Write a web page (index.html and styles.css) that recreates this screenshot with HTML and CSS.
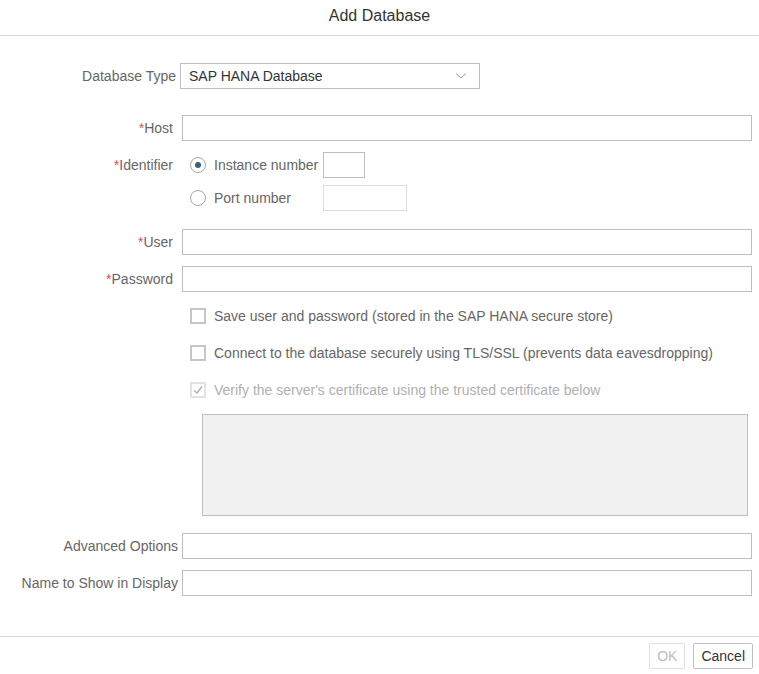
FILE: index.html
```html
<!DOCTYPE html>
<html>
<head>
<meta charset="utf-8">
<title>Add Database</title>
<link rel="stylesheet" href="styles.css">
</head>
<body>
<div class="dialog">
  <div class="header">Add Database</div>
  <div class="form">
    <div class="row">
      <label class="label label-db">Database Type</label>
      <div class="select">
        <span>SAP HANA Database</span>
        <svg class="chev" width="12" height="8" viewBox="0 0 12 8"><polyline points="1,1.5 6,6 11,1.5" fill="none" stroke="#8a9bb0" stroke-width="1"/></svg>
      </div>
    </div>
    <div class="row row-host">
      <label class="label label-req"><span class="req">*</span>Host</label>
      <input class="field" type="text">
    </div>
    <div class="row row-ident">
      <label class="label label-req label-top"><span class="req">*</span>Identifier</label>
      <div class="radios">
        <div class="radio-row">
          <span class="radio checked"></span>
          <span class="radio-text">Instance number</span>
          <input class="small-field" type="text">
        </div>
        <div class="radio-row">
          <span class="radio"></span>
          <span class="radio-text">Port number</span>
          <input class="port-field" type="text" disabled>
        </div>
      </div>
    </div>
    <div class="row row-user">
      <label class="label label-req"><span class="req">*</span>User</label>
      <input class="field" type="text">
    </div>
    <div class="row">
      <label class="label label-req"><span class="req">*</span>Password</label>
      <input class="field" type="password">
    </div>
    <div class="row check-row">
      <span class="checkbox"></span>
      <span class="check-text">Save user and password (stored in the SAP HANA secure store)</span>
    </div>
    <div class="row check-row">
      <span class="checkbox"></span>
      <span class="check-text">Connect to the database securely using TLS/SSL (prevents data eavesdropping)</span>
    </div>
    <div class="row check-row">
      <span class="checkbox disabled">
        <svg width="12" height="12" viewBox="0 0 12 12"><polyline points="2,6.5 5,9 10,2.5" fill="none" stroke="#9fb2c8" stroke-width="1.4"/></svg>
      </span>
      <span class="check-text disabled-text">Verify the server's certificate using the trusted certificate below</span>
    </div>
    <div class="row cert-row">
      <div class="cert"></div>
    </div>
    <div class="row row-adv">
      <label class="label label-plain">Advanced Options</label>
      <input class="field" type="text">
    </div>
    <div class="row">
      <label class="label label-plain">Name to Show in Display</label>
      <input class="field" type="text">
    </div>
  </div>
  <div class="footer">
    <button class="btn btn-disabled" disabled>OK</button>
    <button class="btn">Cancel</button>
  </div>
</div>
</body>
</html>
```
FILE: styles.css
```css
* { box-sizing: border-box; }
html, body {
  margin: 0;
  padding: 0;
  background: #ffffff;
}
body {
  font-family: "Liberation Sans", Arial, sans-serif;
  font-size: 14px;
  color: #666666;
}
.dialog {
  width: 759px;
  height: 674px;
  display: flex;
  flex-direction: column;
}
.header {
  height: 36px;
  border-bottom: 1px solid #dcdcdc;
  display: flex;
  align-items: center;
  justify-content: center;
  padding-bottom: 4px;
  font-size: 16px;
  color: #333333;
}
.form {
  padding: 27px 7px 0 0;
  display: flex;
  flex-direction: column;
  gap: 11px;
  flex: 1;
}
.row {
  display: flex;
  align-items: center;
  min-height: 26px;
}
.row-host { margin-top: 15px; }
.row-user { margin-top: 7px; }
.row-adv { margin-top: 6px; }
.label {
  width: 178px;
  flex: none;
  text-align: right;
  white-space: nowrap;
}
.label-db { width: 176px; }
.label-req { padding-right: 5px; }
.label-plain { padding-right: 0; }
.req { color: #d9534f; }
.field {
  flex: 1;
  height: 26px;
  margin: 0 0 0 4px;
  border: 1px solid #bfbfbf;
  border-radius: 0;
  background: #fff;
  font: inherit;
  padding: 0 6px;
  outline: none;
}
.select {
  width: 300px;
  height: 26px;
  margin-left: 4px;
  border: 1px solid #bfbfbf;
  display: flex;
  align-items: center;
  justify-content: space-between;
  padding: 0 12px 0 8px;
  color: #333333;
}
.chev { display: block; }
.row-ident { align-items: flex-start; }
.label-top { line-height: 26px; }
.radios {
  margin-left: 12px;
  display: flex;
  flex-direction: column;
  gap: 7px;
}
.radio-row {
  display: flex;
  align-items: center;
  height: 26px;
}
.radio {
  width: 16px;
  height: 16px;
  border: 1px solid #a6a6a6;
  border-radius: 50%;
  flex: none;
  display: flex;
  align-items: center;
  justify-content: center;
}
.radio.checked::after {
  content: "";
  width: 6px;
  height: 6px;
  border-radius: 50%;
  background: #346187;
}
.radio-text {
  margin-left: 8px;
  width: 109px;
  flex: none;
}
.small-field, .port-field {
  height: 26px;
  margin: 0;
  border: 1px solid #bfbfbf;
  border-radius: 0;
  background: #fff;
  font: inherit;
  padding: 0 4px;
  outline: none;
}
.small-field { width: 42px; }
.port-field { width: 84px; border-color: #dedede; }
.check-row { padding-left: 190px; }
.checkbox {
  width: 16px;
  height: 16px;
  border: 2px solid #c6c6c6;
  flex: none;
  display: flex;
  align-items: center;
  justify-content: center;
}
.checkbox.disabled {
  border: 2px solid #e2e2e2;
}
.check-text { margin-left: 8px; white-space: nowrap; }
.disabled-text { color: #b0b0b0; }
.cert-row { padding-left: 202px; padding-right: 4px; }
.cert {
  flex: 1;
  height: 102px;
  border: 1px solid #bfbfbf;
  background: #f1f1f1;
}
.footer {
  height: 38px;
  border-top: 1px solid #dcdcdc;
  display: flex;
  justify-content: flex-end;
  align-items: flex-start;
  gap: 8px;
  padding: 6px 6px 0 0;
}
.btn {
  height: 26px;
  padding: 0 7px;
  border: 1px solid #bfbfbf;
  border-radius: 2px;
  background: #fff;
  color: #333333;
  font: inherit;
  font-size: 14px;
}
.btn-disabled {
  border-color: #e0e0e0;
  color: #bdbdbd;
}
```
